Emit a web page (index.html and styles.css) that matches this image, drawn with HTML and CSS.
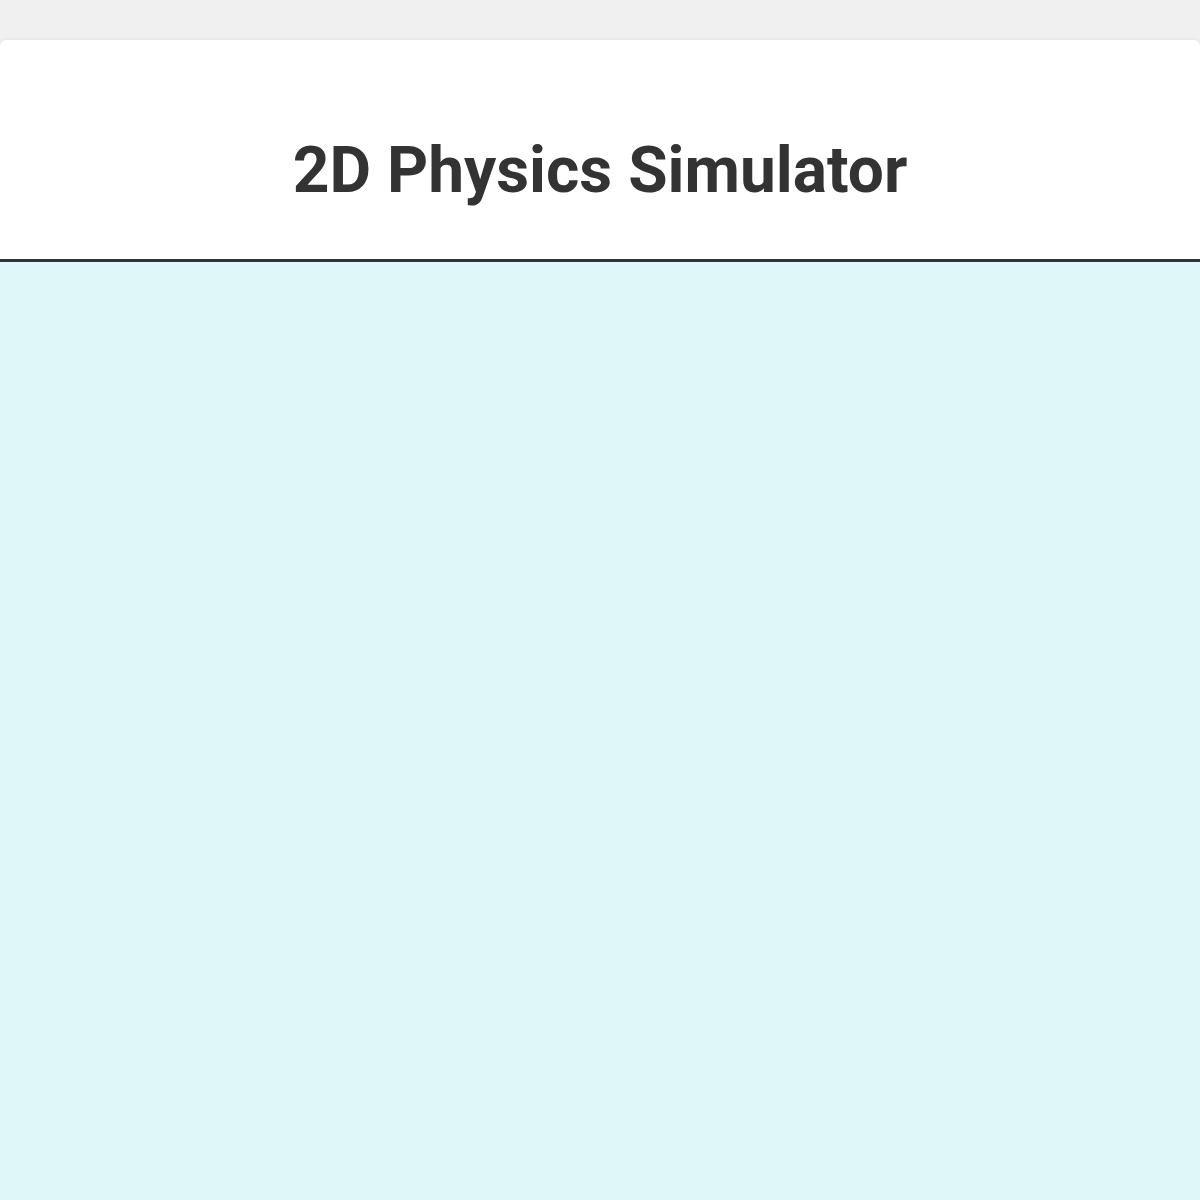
FILE: index.html
```html
<!DOCTYPE html>
<html lang="en">
<head>
  <meta charset="UTF-8">
  <meta name="viewport" content="width=device-width, initial-scale=1.0">
  <title>2D Physics Simulator</title>
  <link rel="stylesheet" href="styles.css">
</head>
<body>
  <div class="container">
    <header class="header">
      <h1>2D Physics Simulator</h1>
    </header>
    <div class="canvas-wrap"></div>
  </div>
</body>
</html>
```

FILE: styles.css
```css
body {
  margin: 0;
  padding-top: 40px;
  background-color: #f0f0f0;
  font-family: Roboto, "Liberation Sans", sans-serif;
  color: #333;
}

.container {
  background-color: #fff;
  border-radius: 6px;
  box-shadow: 0 0 4px rgba(0, 0, 0, 0.08);
  overflow: hidden;
}

.header {
  height: 219px;
  display: flex;
  align-items: center;
  justify-content: center;
  border-bottom: 3px solid #333;
}

h1 {
  margin: 42px 0 0;
  font-size: 64px;
  font-weight: 700;
}

.canvas-wrap {
  height: 960px;
  background-color: #e0f7fa;
}
```
